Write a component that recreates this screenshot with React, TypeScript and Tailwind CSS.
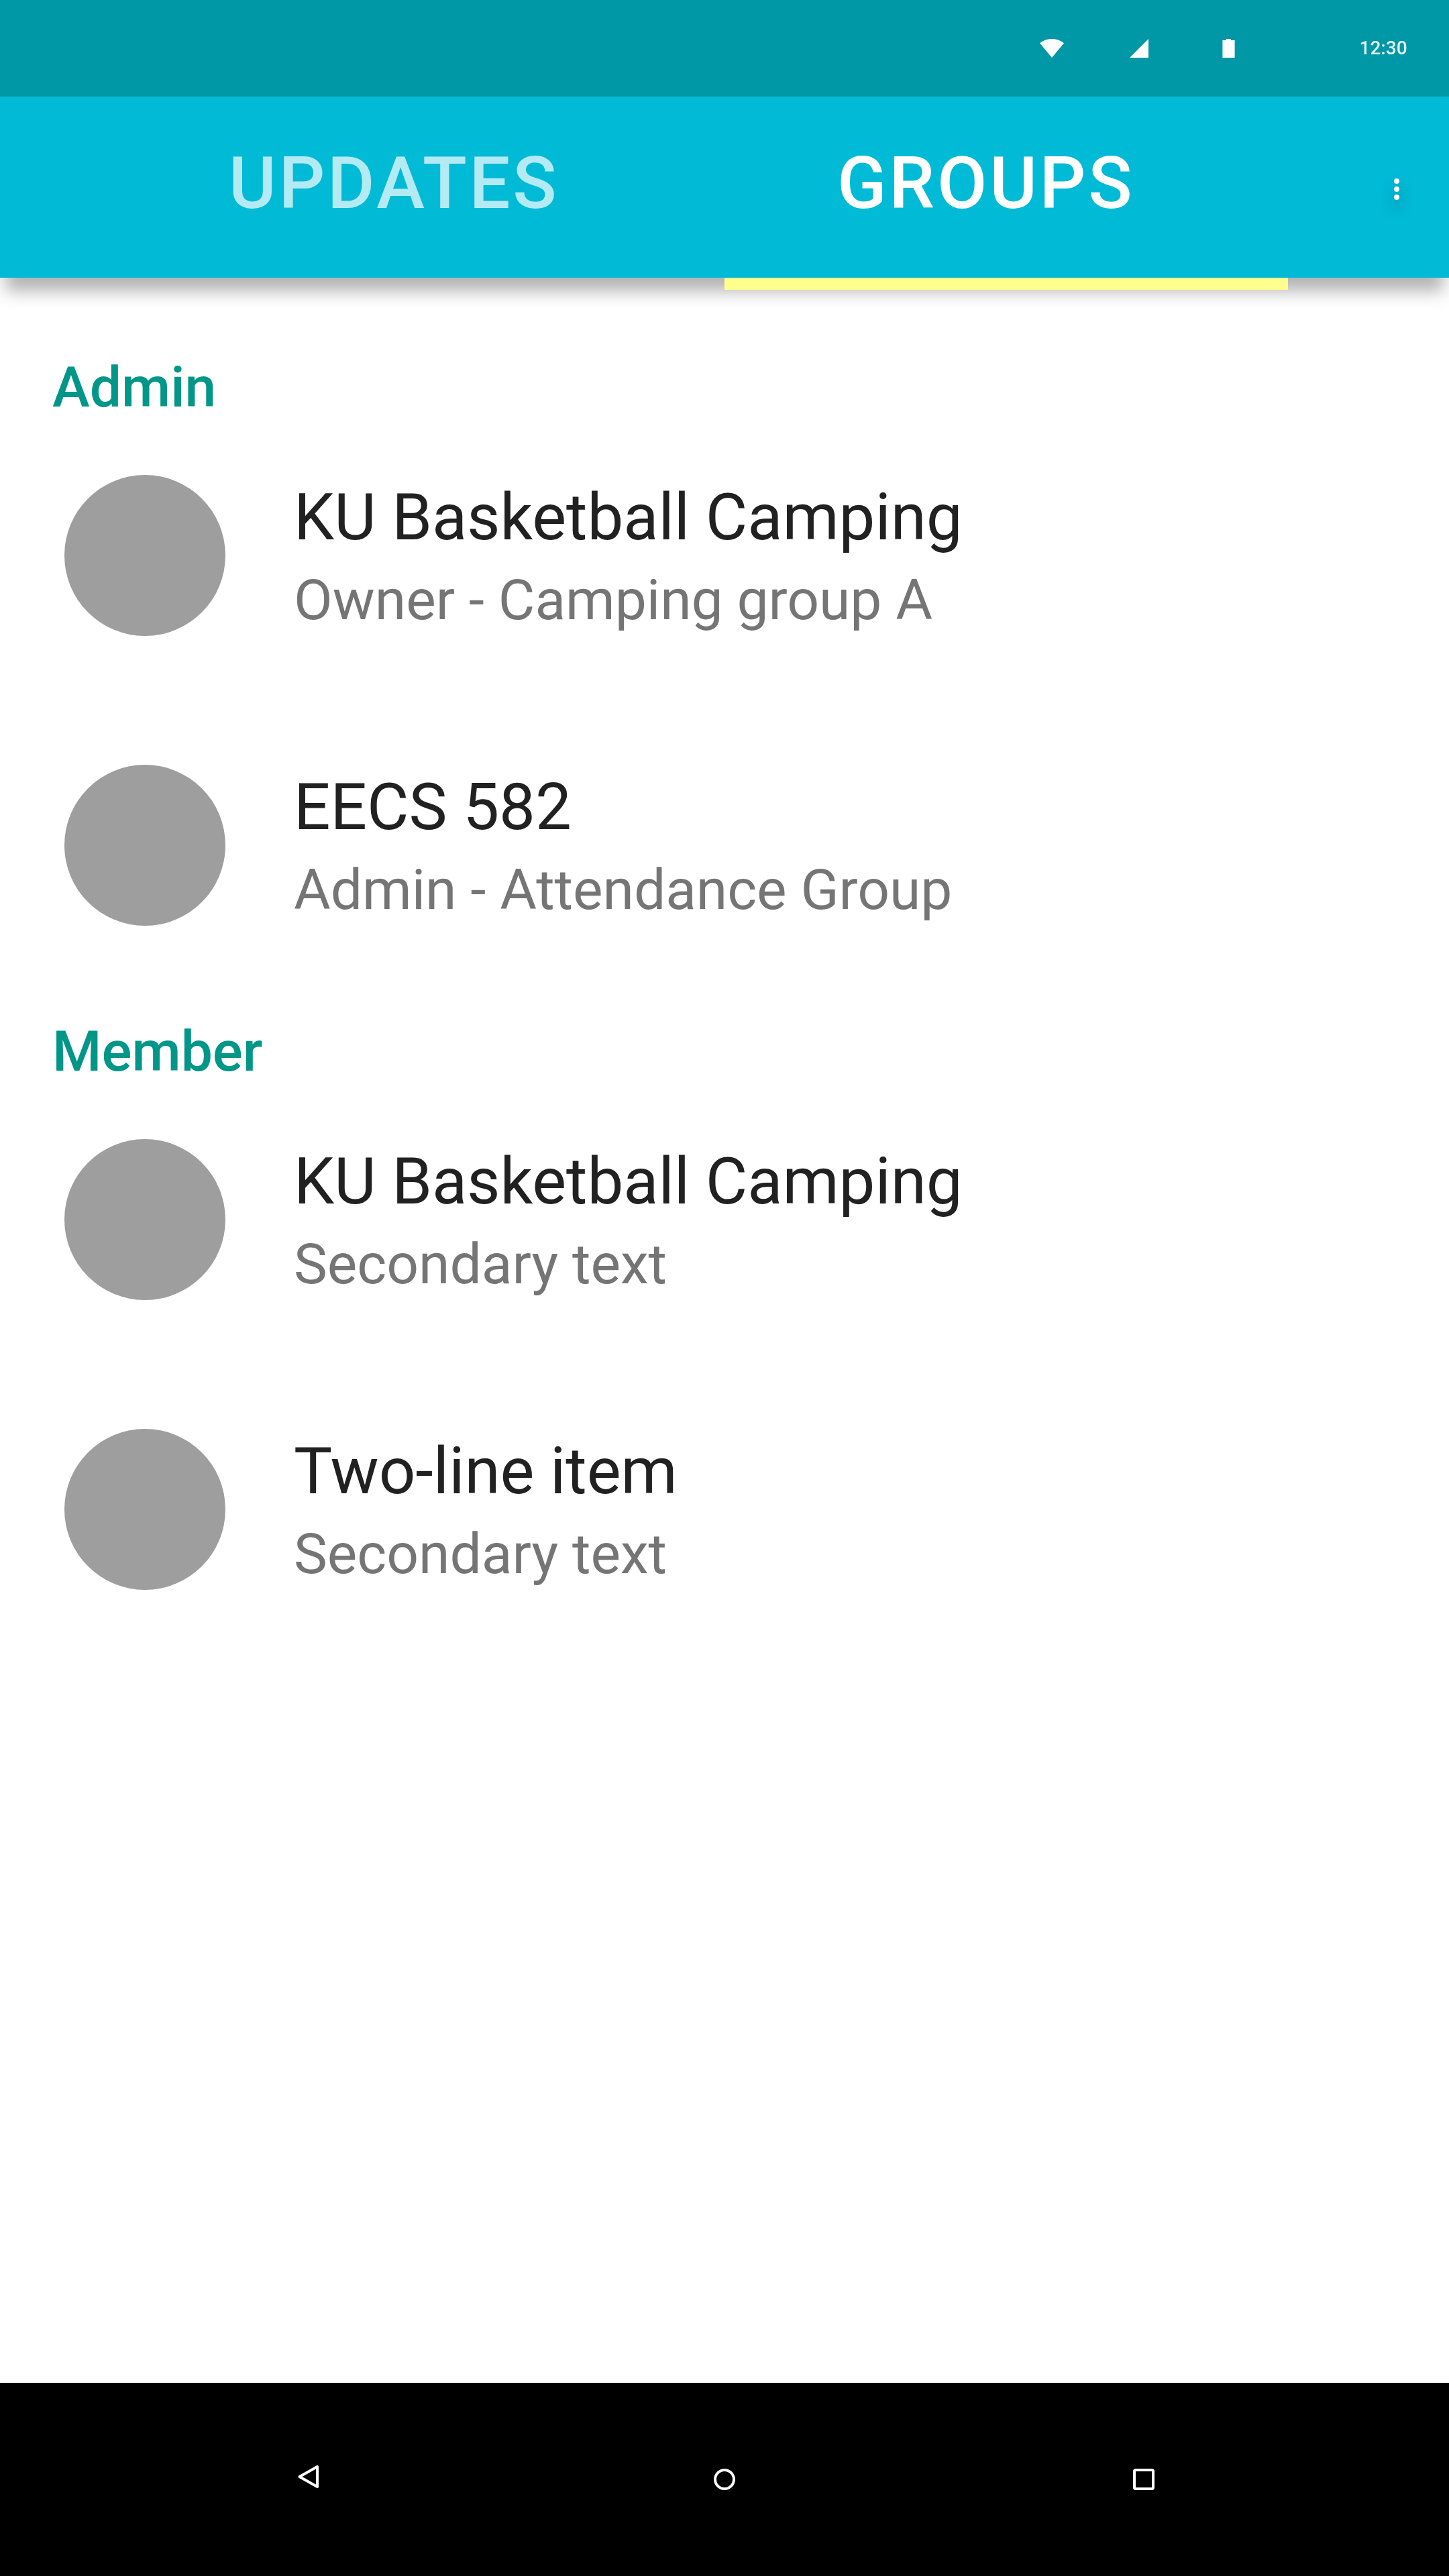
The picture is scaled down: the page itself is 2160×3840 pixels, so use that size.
type Group = { title: string; detail: string };

const sections: { name: string; groups: Group[] }[] = [
  {
    name: "Admin",
    groups: [
      { title: "KU Basketball Camping", detail: "Owner - Camping group A" },
      { title: "EECS 582", detail: "Admin - Attendance Group" },
    ],
  },
  {
    name: "Member",
    groups: [
      { title: "KU Basketball Camping", detail: "Secondary text" },
      { title: "Two-line item", detail: "Secondary text" },
    ],
  },
];

function StatusBar() {
  return (
    <div className="flex h-36 shrink-0 items-center justify-end bg-[#0097a7] pr-[61.5px] text-white">
      <svg className="h-7 w-9" viewBox="0 0 36 28" fill="currentColor">
        <path d="M0 6.3C4.5 2.5 11 0 18 0S31.500 2.500 36 6.300L18 28Z" />
      </svg>
      <svg className="ml-[98.5px] h-7 w-7" viewBox="0 0 28 28" fill="currentColor">
        <path d="M28 0V28H0Z" />
      </svg>
      <svg className="ml-[110px] h-7 w-[19px]" viewBox="0 0 19 28" fill="currentColor">
        <path d="M0.400 2H6V0H13V2H18.600V28H0.400Z" />
      </svg>
      <span className="ml-[185.5px] w-[72px] text-[28px] leading-9 font-medium opacity-90">12:30</span>
    </div>
  );
}

function AppBar() {
  return (
    <div className="relative z-10 flex h-[270px] shrink-0 bg-[#00bad6] text-[108px] leading-[126px] font-medium tracking-[3.75px] text-white shadow-[0_28px_24px_-8px_rgba(0,0,0,0.3)]">
      <div className="w-[1080px] pt-[66px] pl-[341px] text-white/70">UPDATES</div>
      <div className="relative w-[840px] pt-[66px] pl-[168px]">
        GROUPS
        <div className="absolute top-full left-0 h-[18px] w-full bg-[#ffff8d]" />
      </div>
      <div className="flex flex-1 flex-col items-end pt-[122px] pr-[74px]">
        <svg
          className="h-8 w-2 overflow-visible drop-shadow-[0_12px_10px_rgba(0,0,0,0.35)]"
          viewBox="0 0 8 32"
          fill="currentColor"
        >
          <circle cx="4" cy="4" r="4" />
          <circle cx="4" cy="16" r="4" />
          <circle cx="4" cy="28" r="4" />
        </svg>
      </div>
    </div>
  );
}

function GroupRow({ title, detail }: Group) {
  return (
    <li className="flex h-[432px] pt-9 pl-24">
      <div className="h-60 w-60 shrink-0 rounded-full bg-[#9e9e9e]" />
      <div className="ml-[102px] pt-[3px] tracking-[-0.05px]">
        <div className="text-[96px] leading-[120px] text-[#212121]">{title}</div>
        <div className="mt-1 text-[84px] leading-[120px] text-[#757575]">{detail}</div>
      </div>
    </li>
  );
}

function NavBar() {
  return (
    <div className="flex h-72 shrink-0 bg-black pt-[120px] pl-[442px] text-white">
      <svg
        className="h-12 w-9"
        viewBox="0 0 36 48"
        fill="none"
        stroke="currentColor"
        strokeWidth="4"
        strokeLinejoin="round"
      >
        <path d="M31 5V35L4.500 20Z" />
      </svg>
      <svg
        className="mt-2 ml-[586px] h-8 w-8"
        viewBox="0 0 32 32"
        fill="none"
        stroke="currentColor"
        strokeWidth="4"
      >
        <circle cx="16" cy="16" r="14" />
      </svg>
      <div className="mt-2 ml-[593px] h-8 w-8 rounded-[4px] border-4 border-white" />
    </div>
  );
}

export default function App() {
  return (
    <div className="flex h-[3840px] w-[2160px] flex-col overflow-hidden bg-white font-[Roboto,sans-serif]">
      <StatusBar />
      <AppBar />
      <main className="flex-1 pt-[92px]">
        {sections.map((section) => (
          <section key={section.name} className="mb-[-40px]">
            <h2 className="h-[166px] pl-[78px] text-[84px] leading-[144px] font-medium text-[#009688]">
              {section.name}
            </h2>
            <ul>
              {section.groups.map((group) => (
                <GroupRow key={group.title} {...group} />
              ))}
            </ul>
          </section>
        ))}
      </main>
      <NavBar />
    </div>
  );
}
